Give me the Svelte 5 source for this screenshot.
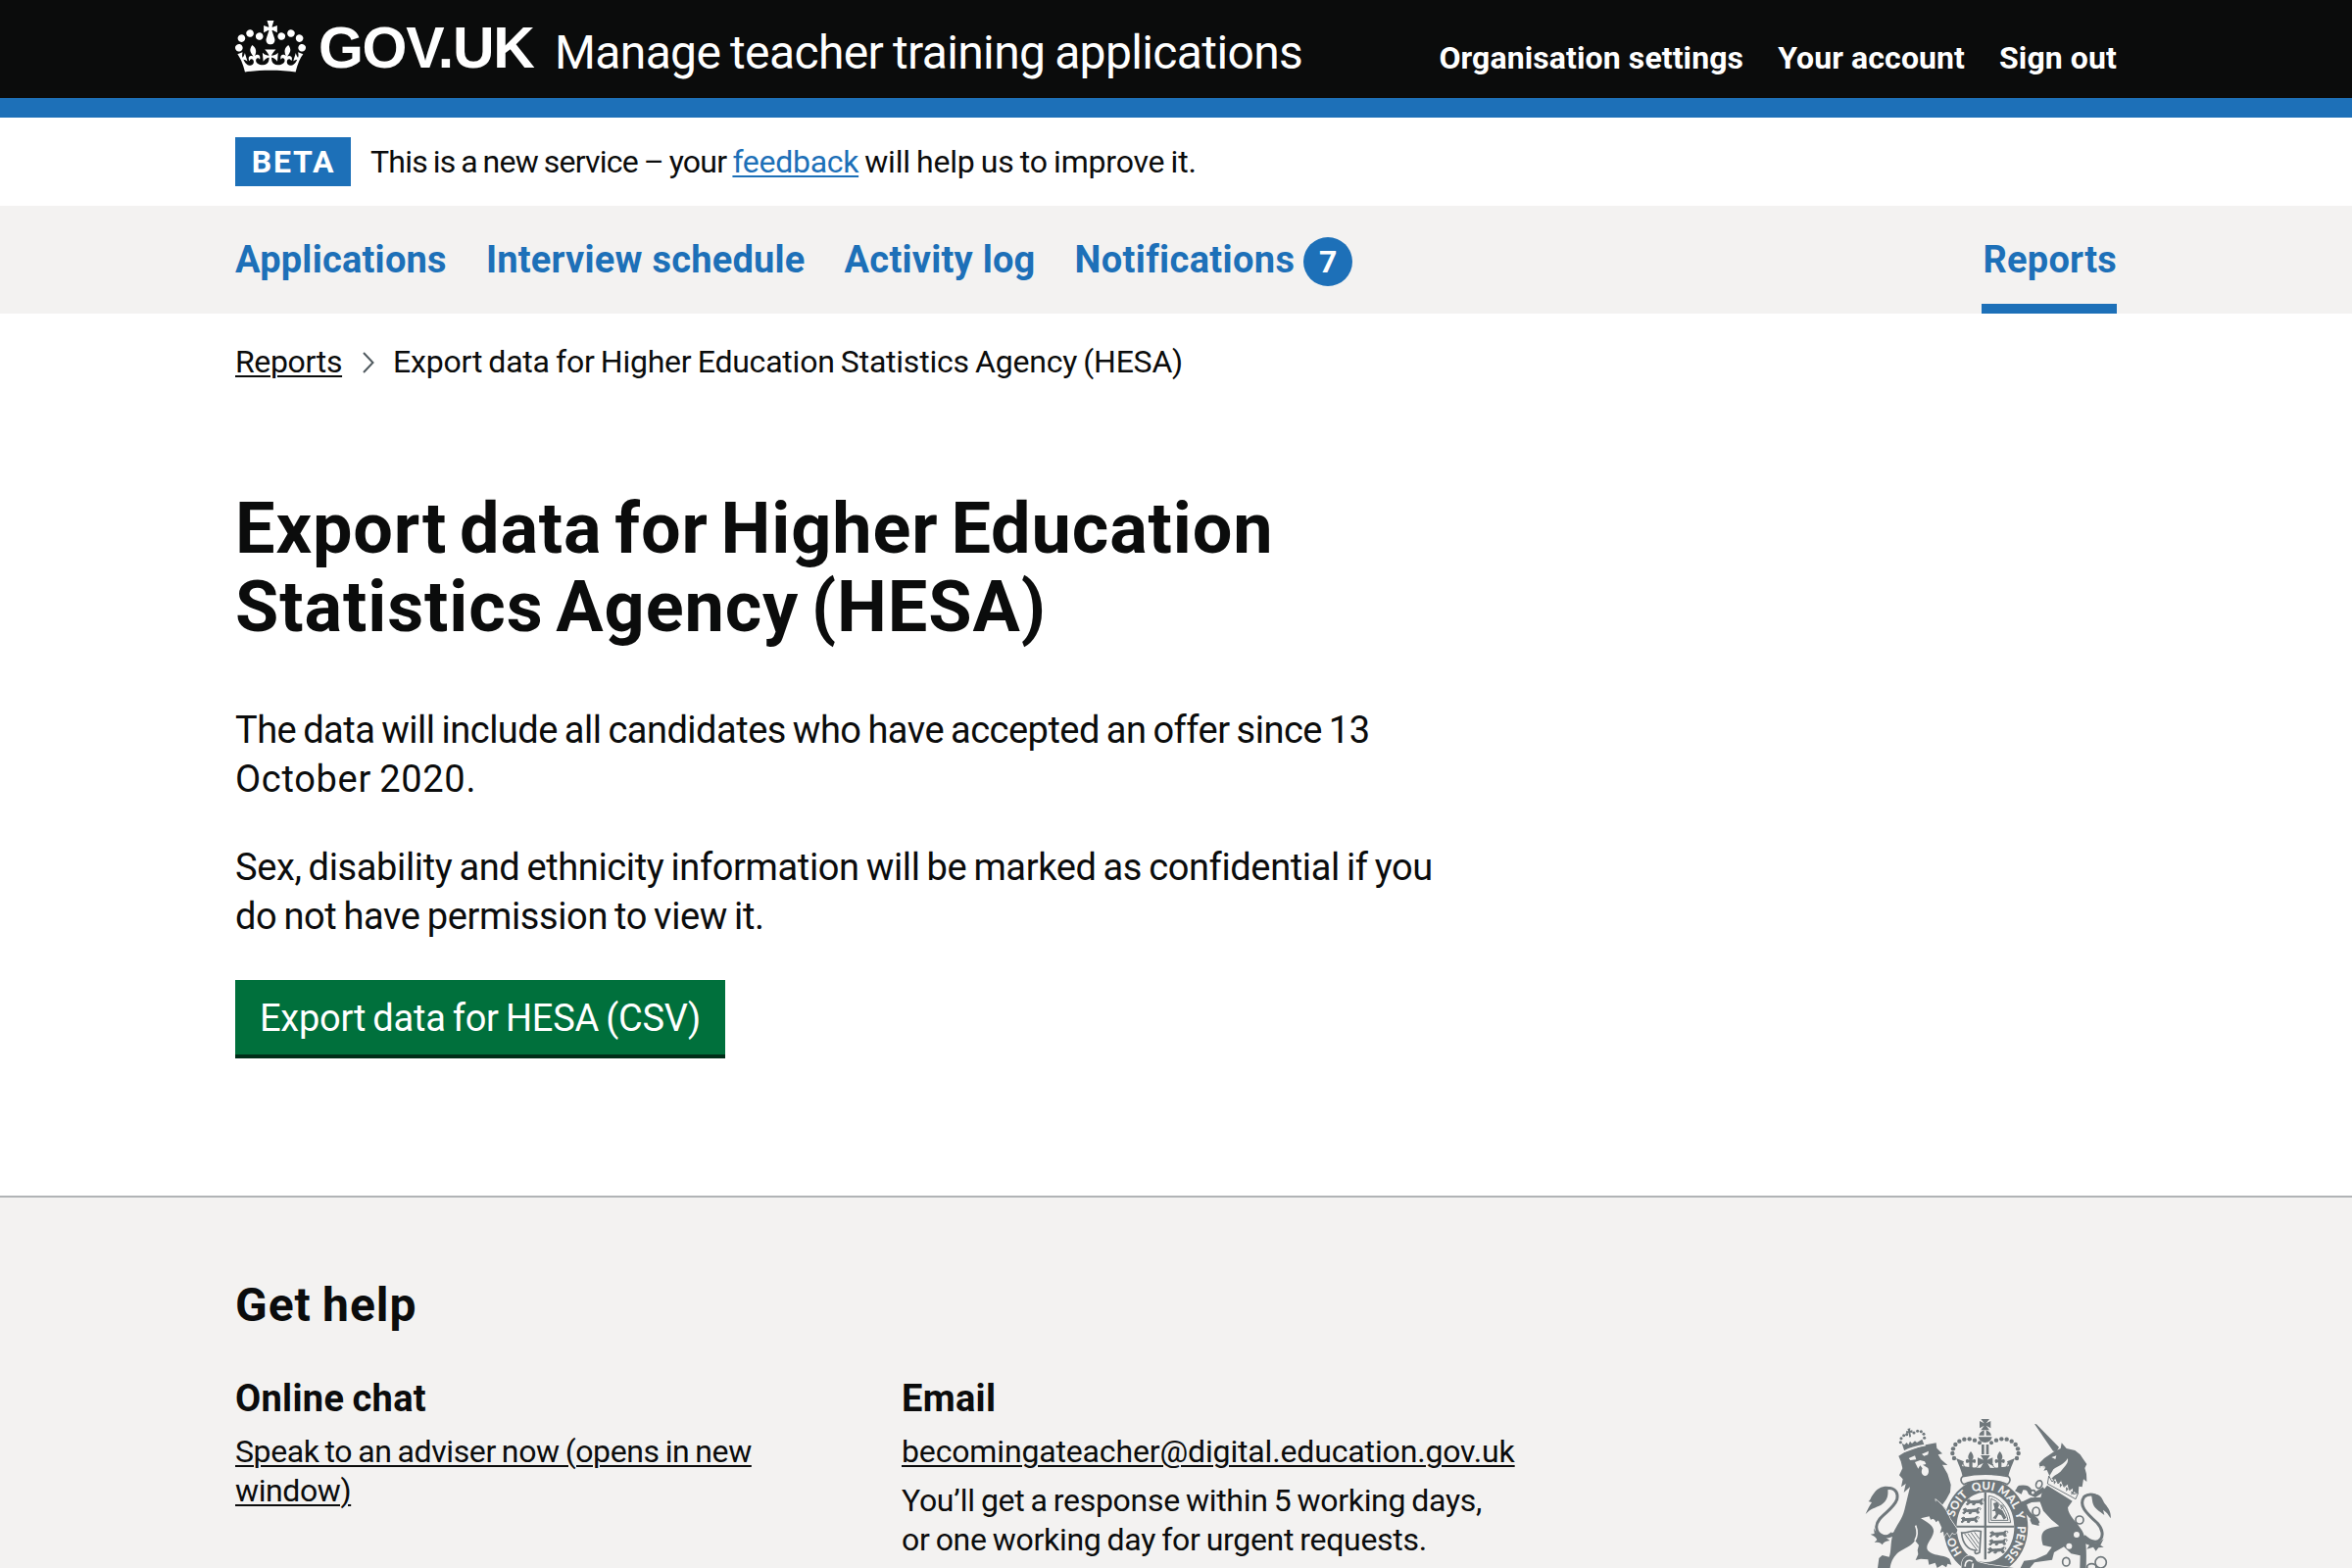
<script>
  const account = ['Organisation settings', 'Your account', 'Sign out'];
  const nav = ['Applications', 'Interview schedule', 'Activity log'];
  const leftBeads = [
    [405, 119], [389, 115], [373, 116], [358, 122], [346, 132], [339, 145], [337, 159], [342, 174]
  ];
  const lionBeads = [[178, 125], [180, 113], [188, 104], [197, 101], [219, 96], [230, 91], [241, 92], [249, 100], [251, 112]];
</script>

<div class="page">
  <header class="header">
    <div class="wrap header-row">
      <a class="logo" href="#home" aria-label="GOV.UK">
        <svg class="crown" viewBox="0 0 132 97" aria-hidden="true">
          <path fill="currentColor" fill-rule="evenodd" d="M25 30.2c3.5 1.5 7.7-.2 9.1-3.7 1.5-3.6-.2-7.8-3.9-9.2-3.6-1.4-7.6.3-9.1 3.9-1.4 3.5.3 7.5 3.9 9zM9 39.5c3.6 1.5 7.8-.2 9.2-3.7 1.5-3.6-.2-7.8-3.9-9.1-3.6-1.5-7.6.2-9.1 3.8-1.4 3.5.3 7.5 3.8 9zM4.4 57.2c3.5 1.5 7.7-.2 9.1-3.8 1.5-3.6-.2-7.7-3.9-9.1-3.5-1.5-7.6.3-9.1 3.8-1.4 3.5.3 7.6 3.9 9.1zm38.3-21.4c3.5 1.5 7.7-.2 9.1-3.8 1.5-3.6-.2-7.7-3.9-9.1-3.6-1.5-7.6.3-9.1 3.8-1.3 3.6.4 7.7 3.9 9.1zm64.4-5.6c-3.6 1.5-7.8-.2-9.1-3.7-1.5-3.6.2-7.8 3.8-9.2 3.6-1.4 7.7.3 9.2 3.9 1.3 3.5-.4 7.5-3.9 9zm15.9 9.3c-3.6 1.5-7.7-.2-9.1-3.7-1.5-3.6.2-7.8 3.7-9.1 3.6-1.5 7.7.2 9.2 3.8 1.5 3.5-.3 7.5-3.8 9zm4.7 17.7c-3.6 1.5-7.8-.2-9.2-3.8-1.5-3.6.2-7.7 3.9-9.1 3.6-1.5 7.7.3 9.2 3.8 1.3 3.5-.4 7.6-3.9 9.1zM89.3 35.8c-3.6 1.5-7.8-.2-9.2-3.8-1.4-3.6.2-7.7 3.9-9.1 3.6-1.5 7.7.3 9.2 3.8 1.4 3.6-.3 7.7-3.9 9.1zM69.7 17.7l8.9 4.7V9.3l-8.9 2.8c-.2-.3-.5-.6-.9-.9L72.4 0H59.6l3.5 11.2c-.3.3-.6.5-.9.9l-8.8-2.8v13.1l8.8-4.7c.3.3.6.7.9.9l-5 15.4v.1c-.2.8-.4 1.6-.4 2.4 0 4.1 3.1 7.5 7 8.1h.2c.3 0 .7.1 1 .1.4 0 .7 0 1-.1h.2c4-.6 7.1-4.1 7.1-8.1 0-.8-.1-1.7-.4-2.4V34l-5.1-15.4c.4-.2.7-.6 1-.9zM66 92.8c16.9 0 32.8 1.1 47.1 3.2 4-16.9 8.9-26.7 14-33.5l-9.6-3.4c1 4.9 1.1 7.2 0 10.2-1.5-1.4-3-4.3-4.2-8.7L108.6 76c2.8-2 5-3.2 7.5-3.3-4.4 9.4-10 11.9-13.6 11.2-4.3-.8-6.3-4.6-5.6-7.9 1-4.7 5.7-5.9 8-.5 4.3-8.7-3-11.4-7.6-8.8 7.1-7.2 7.9-13.5 2.1-21.1-8 6.1-8.1 12.3-4.5 20.8-4.7-5.4-12.1-2.5-9.5 6.2 3.4-5.2 7.9-2 7.2 3.1-.6 4.3-6.4 7.8-13.5 7.2-10.3-.9-10.9-8-11.2-13.8 2.5-.5 7.1 1.8 11 7.3L80.2 60c-4.1 4.4-8 5.3-12.3 5.4 1.4-4.4 8-11.6 8-11.6H55.5s6.4 7.2 7.9 11.6c-4.2-.1-8-1-12.3-5.4l1.4 16.4c3.9-5.5 8.5-7.7 10.9-7.3-.3 5.8-.9 12.8-11.1 13.8-7.2.6-12.9-2.9-13.5-7.2-.7-5 3.8-8.3 7.1-3.1 2.7-8.7-4.6-11.6-9.4-6.2 3.7-8.5 3.6-14.7-4.6-20.8-5.8 7.6-5 13.9 2.2 21.1-4.7-2.6-11.9.1-7.7 8.8 2.3-5.5 7.1-4.2 8.1.5.7 3.3-1.3 7.1-5.7 7.9-3.5.7-9-1.8-13.5-11.2 2.5.1 4.7 1.3 7.5 3.3l-4.7-15.4c-1.2 4.4-2.7 7.2-4.3 8.7-1.1-3-.9-5.3 0-10.2l-9.5 3.4c5 6.9 9.9 16.7 14 33.5 14.8-2.1 30.8-3.2 47.7-3.2z" />
        </svg>
        <span class="logotype">GOV.UK</span>
      </a>
      <a class="service" href="#service">Manage teacher training applications</a>
      <nav class="account">
        {#each account as item}
          <a href="#account">{item}</a>
        {/each}
      </nav>
    </div>
  </header>

  <div class="wrap phase">
    <strong class="tag">BETA</strong>
    <div class="phase-text"><span class="lead">This is a new service – your</span> <a href="#feedback">feedback</a> <span class="rest">will help us to improve it.</span></div>
  </div>

  <div class="subnav">
    <div class="wrap subnav-row">
      {#each nav as item}
        <a href="#nav">{item}</a>
      {/each}
      <a class="notifications" href="#nav">Notifications<span class="badge">7</span></a>
      <a class="current" href="#reports">Reports</a>
    </div>
  </div>

  <div class="wrap crumbs">
    <a href="#reports">Reports</a>
    <svg class="chevron" viewBox="0 0 12 22" aria-hidden="true"><path d="M1 1 L10.5 11 L1 21" /></svg>
    <span>Export data for Higher Education Statistics Agency (HESA)</span>
  </div>

  <main class="wrap main">
    <h1>Export data for Higher Education<br />Statistics Agency (HESA)</h1>
    <p>
      <span class="line l1">The data will include all candidates who have accepted an offer since 13</span>
      <span class="line l2">October 2020.</span>
    </p>
    <p>
      <span class="line l3">Sex, disability and ethnicity information will be marked as confidential if you</span>
      <span class="line l3">do not have permission to view it.</span>
    </p>
    <button type="button">Export data for HESA (CSV)</button>
  </main>

  <footer class="footer">
    <div class="wrap">
      <h2>Get help</h2>
      <div class="footer-grid">
        <section class="chat">
          <h3>Online chat</h3>
          <a href="#chat">Speak to an adviser now (opens in new<br />window)</a>
        </section>
        <section class="email">
          <h3>Email</h3>
          <a class="address" href="#mail">becomingateacher@digital.education.gov.uk</a>
          <div class="response">You’ll get a response within 5 working days,<br />or one working day for urgent requests.</div>
        </section>
        <svg class="crest" viewBox="60 45 780 465" aria-hidden="true">
          <defs>
            <path id="motto" d="M438,500 A98,115 0 0 1 438,270 A98,115 0 0 1 438,500" />
            <g id="passant">
              <path class="bold-shape" d="M2,6 L10,2 L15,7 L28,6 L42,5 L50,0 L48,9 L52,16 L46,18 L42,12 L30,13 L26,19 L20,18 L22,12 L12,13 L6,19 L1,17 L7,11 Z" />
              <path class="line-thin" d="M44,6 C56,-4 60,4 53,8" />
            </g>
          </defs>

          <!-- lion -->
          <path d="M172,167 L190,156 L255,133 L287,127 L289,143 L306,160 L293,163 L302,178 L322,195 L306,194 L322,222 L332,255 L330,278 L318,300 L305,318 L328,340 L340,372 L352,393 C350,407 343,408 336,402 L328,414 L321,401 L311,413 L309,398 L299,403 L304,386 L300,374 L309,360 L295,364 L286,370 L282,358 L270,362 L266,352 L240,358 C262,372 282,382 279,400 C276,422 250,440 262,457 C277,474 305,468 328,482 L334,500 L322,497 L318,508 L306,500 L290,510 L284,494 L265,500 L262,484 L240,482 L224,486 L232,468 L230,455 L234,440 L222,425 C215,442 185,450 168,465 C153,480 148,495 146,510 L108,510 L112,480 L122,471 L143,476 C150,462 146,432 155,405 C165,378 183,362 190,332 L207,262 L188,279 L194,252 L180,262 L185,238 L174,226 L184,205 L179,184 Z" />
          <path class="paper" d="M203,174 L222,166 L226,178 L208,180 Z M243,161 L264,152 L262,163 L250,167 Z M222,186 L238,180 L252,184 L256,192 L246,194 L262,204 C268,218 260,229 252,228 C242,225 240,215 245,205 L238,196 L232,206 Z" />
          <path class="paper-line" d="M224,380 C232,400 230,412 222,426" />
          <path class="tail" d="M160,403 C135,425 105,410 104,384 C106,350 155,335 167,300 C173,272 152,260 130,268" />
          <path d="M150,262 C128,256 106,264 96,282 C84,296 88,302 79,306 L90,309 C82,322 76,332 71,345 C86,328 102,325 118,317 C136,306 141,290 139,270 Z" />
          <path d="M96,388 L98,405 L86,407 C98,413 104,416 106,424 L98,432 C112,430 117,432 122,439 C126,430 134,428 145,426 L132,416 L156,412 L150,400 C130,418 108,412 96,388 Z" />
          <path d="M190,152 L182,128 L190,133 L197,126 L202,133 L207,122 L213,129 L222,121 L228,126 L244,116 L250,132 Z" />
          <path class="paper-line" d="M188,154 C206,144 228,137 254,134" />
          {#each lionBeads as [x, y]}
            <circle cx={x} cy={y} r="4.6" />
          {/each}
          <path d="M199,84 L208,82 L207,89 L214,88 L215,96 L208,95 L210,108 L205,110 L203,97 L196,99 L195,91 L202,91 Z" />

          <!-- unicorn -->
          <path d="M588,69 L594,70 L663,140 L656,153 L645,152 Z" />
          <path d="M650,152 L668,144 L671,127 L686,144 L712,150 L728,163 L738,178 L748,192 L742,204 L747,222 L748,246 L738,238 L734,262 L724,260 L722,284 L640,236 C650,224 662,222 670,212 C684,196 692,188 690,174 C676,196 660,196 646,208 L634,228 L626,210 L616,212 L622,202 L611,202 L618,194 L604,203 L602,190 L618,174 Z" />
          <path class="paper" d="M640,171 L655,166 L652,177 Z M602,199 L622,199 L612,204 Z" />
          <path class="collar" d="M632,228 L642,246 L652,234 L660,252 L670,241 L678,262 L690,252 L695,272 L706,264 L707,284 L722,280 L714,299 L628,252 Z" />
          <path d="M646,240 l8,6 -6,8 z M665,250 l8,6 -7,8 z M684,262 l8,6 -7,8 z M700,274 l7,5 -6,8 z" />
          <path d="M627,257 L704,305 L690,325 C692,352 716,366 734,396 C746,420 748,440 746,510 L727,510 L728,472 L700,466 L678,445 L648,462 L642,485 L588,493 L574,510 L545,510 L556,488 L590,484 L625,468 L641,446 L614,440 C604,408 612,392 640,386 L664,382 L640,362 L615,335 L604,305 L612,275 Z" />
          <path class="tail" d="M740,412 C785,455 815,410 780,372 C745,340 722,318 740,292 C750,284 764,284 774,288" />
          <path d="M762,284 C782,280 794,290 801,310 C810,322 824,336 821,358 C814,346 808,338 798,332 L802,348 C786,336 770,328 766,310 Z" />
          <path d="M734,408 C756,436 782,440 800,420 L790,440 L800,446 L784,448 L776,458 L768,446 L748,452 L756,440 L740,434 Z" />
          <g class="ring">
            <circle cx="726" cy="363" r="12" />
            <ellipse cx="685" cy="491" rx="11" ry="13" />
            <circle cx="791" cy="493" r="17" />
            <ellipse cx="763" cy="507" rx="14" ry="10" />
          </g>
          <circle class="paper" cx="717" cy="408" r="9" />
          <circle class="paper" cx="694" cy="443" r="9" />

          <!-- garter and shield -->
          <path class="paper-edge" fill-rule="evenodd" d="M438,237 C508,237 568,302 568,385 C568,468 508,533 438,533 C368,533 310,468 310,385 C310,302 368,237 438,237 Z M438,278 C388,278 350,325 350,385 C350,445 388,492 438,492 C488,492 526,445 526,385 C526,325 488,278 438,278 Z" />

          <!-- lion's arm over the garter -->
          <path class="paper-edge" d="M286,301 C304,314 320,334 330,360 L352,393 C350,407 343,408 336,402 L328,414 L321,401 L311,413 L309,398 L299,403 L304,386 L290,356 Z" />
          <path d="M270,300 L290,308 L306,330 L306,362 L286,366 L266,350 Z" />

          <g class="motto">
            <text><textPath href="#motto" startOffset="16.5%">HO</textPath></text>
            <text><textPath href="#motto" startOffset="35.5%">SOIT</textPath></text>
            <text><textPath href="#motto" startOffset="49%">QUI</textPath></text>
            <text><textPath href="#motto" startOffset="61%">MAL</textPath></text>
            <text><textPath href="#motto" startOffset="70%">Y</textPath></text>
            <text><textPath href="#motto" startOffset="82.5%">PENSE</textPath></text>
          </g>
          <path d="M434,278 H441 V380 H526 V386 H441 V484 H434 V386 H350 V380 H434 Z" />
          <use href="#passant" x="378" y="298" />
          <use href="#passant" x="367" y="325" />
          <use href="#passant" x="362" y="352" />
          <use href="#passant" x="450" y="396" />
          <use href="#passant" x="448" y="421" />
          <use href="#passant" x="444" y="446" />
          <path class="line-thin" d="M448,289 V371 H515 M448,289 C478,292 508,322 515,371 M455,298 V364 H507 M455,298 C478,305 500,330 507,364" />
          <path d="M462,312 L474,308 L480,318 L476,326 L490,334 L502,356 L494,362 L486,348 L478,346 L470,360 L460,358 L470,346 L468,336 L458,336 L466,328 Z" />
          <path class="line-thin" d="M488,330 C480,316 494,312 492,326" />
          <path class="harp" d="M365,402 C385,405 398,390 424,398 L420,462 C408,470 402,464 408,456 C385,455 367,435 365,402 Z" />
          <path class="line-thin" d="M374,405 L414,458 M384,404 L416,448 M394,402 L418,436 M404,400 L420,422" />
          <path class="paper-edge" d="M365,512 C362,482 378,468 396,474 C414,480 402,490 424,494 L450,500 L540,512 Z" />
          <path class="paper-line" d="M376,506 C374,490 386,482 398,490 M400,496 L398,510" />

          <!-- unicorn's forelegs over the garter -->
          <path class="leg" d="M618,268 L590,286 L576,280 C570,264 562,262 544,264 L538,270" />
          <path class="leg" d="M614,300 L578,302 L556,312 C562,336 570,348 592,362 L598,374" />
          <path d="M528,274 L540,258 L556,264 L548,284 Z M550,305 L545,332 L558,340 L562,318 Z M574,362 L580,376 L602,381 L600,364 L586,352 Z" />
          <g class="ring">
            <ellipse cx="602" cy="254" rx="9" ry="12" transform="rotate(20 602 254)" />
            <circle class="paper" cx="583" cy="279" r="7" />
            <ellipse cx="593" cy="337" rx="11" ry="13" />
          </g>

          <!-- imperial crown -->
          <path d="M348,174 L372,184 L366,198 C410,206 466,206 510,198 L504,184 L528,174 C516,203 512,212 508,230 C466,221 410,221 368,230 C364,212 360,203 348,174 Z" />
          <path class="line-thin" d="M370,190 C372,208 390,208 393,196 C396,210 414,208 416,192 M460,192 C462,208 480,210 482,196 C486,208 504,208 506,190" />
          <path class="band" d="M368,230 C410,221 466,221 508,230 C516,236 514,248 505,254 C470,238 406,238 371,254 C362,248 360,236 368,230 Z" />
          <path d="M424,54 H450 L440,67 L454,60 V82 L440,74 L450,88 H424 L434,74 L420,82 V60 L434,67 Z" />
          <path d="M418,104 C420,95 428,90 434,88 V104 Z M456,104 C454,95 446,90 440,88 V104 Z M416,109 H458 C456,119 448,126 437,126 C426,126 418,119 416,109 Z" />
          <path d="M426,132 H434 V162 H426 Z M440,132 H448 V162 H440 Z" />
          <path d="M423,165 H452 L443,179 L460,172 V197 L444,189 L454,206 H421 L431,189 L414,197 V172 L432,179 Z" />
          <path id="fleur" d="M393,153 C404,166 402,174 397,180 C406,172 412,180 406,189 L398,187 V204 H388 V187 L380,189 C374,180 380,172 389,180 C384,174 382,166 393,153 Z" />
          <use href="#fleur" x="89" />
          {#each leftBeads as [x, y]}
            <circle cx={x} cy={y} r="6.6" />
            <circle cx={876 - x} cy={y} r="6.6" />
          {/each}
          <circle cx="420" cy="127" r="6" />
          <circle cx="456" cy="127" r="6" />
        </svg>
      </div>
    </div>
  </footer>
</div>

<style>
  :global(body) {
    overflow: hidden;
    background: #fff;
  }
  .page {
    height: 1600px;
    overflow: hidden;
    display: flex;
    flex-direction: column;
    color: #0b0c0c;
    font-family: Roboto, 'Liberation Sans', sans-serif;
    font-size: 32px;
    line-height: 40px;
    word-spacing: -1.5px;
  }
  .page * {
    box-sizing: border-box;
  }
  .wrap {
    width: 1920px;
    margin: 0 auto;
  }
  a {
    color: inherit;
    white-space: nowrap;
  }
  .header {
    flex: none;
    height: 120px;
    background: #0b0c0c;
    border-bottom: 20px solid #1d70b8;
    color: #fff;
  }
  .header a,
  .subnav a {
    text-decoration: none;
  }
  .header-row {
    height: 100px;
    display: flex;
    align-items: flex-start;
  }
  .logo {
    display: flex;
    width: 326px;
  }
  .crown {
    flex: none;
    width: 72px;
    height: 53px;
    margin-top: 21px;
  }
  .logotype {
    margin: 16px 0 0 13px;
    font: 700 59px/66px 'Liberation Sans', sans-serif;
    letter-spacing: -1.3px;
  }
  .service {
    margin-top: 24px;
    font-size: 48px;
    line-height: 60px;
    letter-spacing: -0.63px;
  }
  .account {
    display: flex;
    gap: 35px;
    margin: 39px 0 0 auto;
    font-weight: 700;
    letter-spacing: 0.1px;
    word-spacing: 0;
  }
  .phase {
    flex: none;
    height: 90px;
    display: flex;
    align-items: center;
    gap: 20px;
  }
  .tag {
    width: 118px;
    height: 50px;
    background: #1d70b8;
    color: #fff;
    line-height: 50px;
    letter-spacing: 1.8px;
    padding-left: 1px;
    text-align: center;
  }
  .phase-text {
    letter-spacing: -0.3px;
    white-space: nowrap;
  }
  .lead {
    letter-spacing: -0.75px;
  }
  .rest {
    letter-spacing: -0.2px;
  }
  .phase-text a {
    color: #1d70b8;
  }
  .phase-text a,
  .crumbs a,
  .footer a {
    text-decoration-thickness: 2px;
    text-underline-offset: 3px;
  }
  .subnav {
    flex: none;
    height: 110px;
    background: #f3f2f1;
  }
  .subnav-row {
    height: 110px;
    display: flex;
    gap: 40px;
    color: #1d70b8;
    font-size: 38px;
    font-weight: 700;
    line-height: 50px;
    letter-spacing: 0.23px;
    word-spacing: 0;
  }
  .subnav a {
    padding-top: 30px;
    height: 110px;
  }
  .notifications {
    display: flex;
    align-items: flex-start;
    gap: 9px;
    letter-spacing: 0.35px;
  }
  .badge {
    width: 50px;
    height: 50px;
    margin-top: 2px;
    border-radius: 50%;
    background: #1d70b8;
    color: #fff;
    font-size: 32px;
    text-align: center;
  }
  .subnav .current {
    margin-left: auto;
    border-bottom: 10px solid #1d70b8;
    padding-left: 1px;
  }
  .crumbs {
    flex: none;
    height: 70px;
    padding-top: 29px;
    display: flex;
    align-items: flex-start;
    letter-spacing: -0.22px;
  }
  .crumbs a {
    letter-spacing: -0.35px;
  }
  .chevron {
    width: 12px;
    height: 22px;
    margin: 10px 19px 0 21px;
    fill: none;
    stroke: #505a5f;
    stroke-width: 2;
  }
  .main {
    flex: none;
    height: 830px;
    padding-top: 110px;
    font-size: 38px;
    line-height: 50px;
    word-spacing: -2px;
  }
  h1,
  h2,
  h3,
  p {
    margin: 0;
  }
  h1 {
    font-size: 72px;
    line-height: 80px;
    letter-spacing: 0.9px;
    word-spacing: -6px;
    margin-bottom: 60px;
  }
  p {
    margin-bottom: 40px;
  }
  .line {
    display: block;
    white-space: nowrap;
  }
  .l1 {
    letter-spacing: -0.5px;
  }
  .l2 {
    letter-spacing: 0.7px;
  }
  .l3 {
    letter-spacing: -0.37px;
  }
  button {
    display: block;
    width: 500px;
    height: 80px;
    padding: 2px 0 0;
    border: 0;
    border-bottom: 4px solid #002d18;
    background: #00703c;
    color: #fff;
    font: inherit;
    letter-spacing: -0.25px;
    word-spacing: -2px;
    white-space: nowrap;
  }
  .footer {
    flex: none;
    height: 380px;
    overflow: hidden;
    border-top: 2px solid #b1b4b6;
    background: #f3f2f1;
    padding-top: 80px;
  }
  h2 {
    font-size: 48px;
    line-height: 60px;
    letter-spacing: 0.95px;
    margin-bottom: 40px;
  }
  h3 {
    font-size: 38px;
    line-height: 50px;
    letter-spacing: 0.3px;
    margin-bottom: 9px;
  }
  .footer-grid {
    display: flex;
    align-items: flex-start;
  }
  .chat {
    width: 680px;
    letter-spacing: -0.4px;
  }
  .email {
    display: flex;
    flex-direction: column;
    align-items: flex-start;
    gap: 10px;
    letter-spacing: -0.3px;
  }
  .email h3 {
    margin-bottom: -1px;
  }
  .address {
    letter-spacing: -0.15px;
  }
  .response {
    white-space: nowrap;
  }
  .crest {
    flex: none;
    width: 260px;
    height: 155px;
    margin: 43px 0 0 auto;
    fill: #6f777b;
  }
  .crest .paper {
    fill: #f3f2f1;
  }
  .paper-line {
    fill: none;
    stroke: #f3f2f1;
    stroke-width: 5;
  }
  .paper-edge {
    stroke: #f3f2f1;
    stroke-width: 4;
    paint-order: stroke;
  }
  .bold-shape {
    stroke: #6f777b;
    stroke-width: 3;
  }
  .tail {
    fill: none;
    stroke: #6f777b;
    stroke-width: 9;
  }
  .leg {
    fill: none;
    stroke: #6f777b;
    stroke-width: 14;
  }
  .ring {
    fill: none;
    stroke: #6f777b;
    stroke-width: 5;
  }
  .line-thin {
    fill: none;
    stroke: #6f777b;
    stroke-width: 3;
  }
  .harp,
  .collar,
  .band {
    fill: #f3f2f1;
    stroke: #6f777b;
    stroke-width: 5;
  }
  .collar {
    stroke-width: 3;
  }
  .motto {
    fill: #f3f2f1;
    font: 900 35px Lato, sans-serif;
    text-anchor: middle;
    word-spacing: 0;
  }
</style>
